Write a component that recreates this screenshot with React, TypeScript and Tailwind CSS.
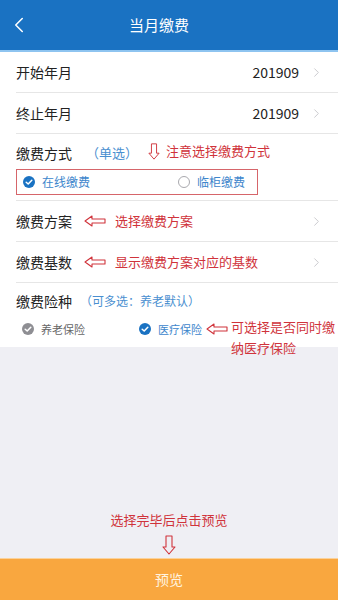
import { ChevronLeft, ChevronRight } from 'lucide-react';

const RED = '#d0333b';

function LeftArrow() {
  return (
    <svg width="22" height="12" viewBox="0 0 22 12" className="shrink-0">
      <path d="M1 6 L8 1 V4 H21 V8 H8 V11 Z" fill="none" stroke={RED} strokeWidth="1.1" strokeLinejoin="round" />
    </svg>
  );
}

function DownArrow({ w = 14, h = 20 }: { w?: number; h?: number }) {
  return (
    <svg width={w} height={h} viewBox="0 0 14 20" className="shrink-0">
      <path d="M4 1 H10 V12 H13 L7 19 L1 12 H4 Z" fill="none" stroke={RED} strokeWidth="1.1" strokeLinejoin="round" />
    </svg>
  );
}

function Check({ color }: { color: string }) {
  return (
    <svg width="12" height="12" viewBox="0 0 12 12" className="shrink-0">
      <circle cx="6" cy="6" r="6" fill={color} />
      <path d="M3.2 6.2 L5.2 8 L8.8 4.2" fill="none" stroke="#fff" strokeWidth="1.5" strokeLinecap="round" strokeLinejoin="round" />
    </svg>
  );
}

function Row({ label, value, note }: { label: string; value?: string; note?: string }) {
  return (
    <div className="flex items-center h-[41px] border-b border-[#e6e6e6] pr-[14px]">
      <span className="text-[14px] text-[#222]">{label}</span>
      {note && (
        <div className="flex items-center ml-[12px] gap-[9px]">
          <LeftArrow />
          <span className="text-[13px]" style={{ color: RED }}>{note}</span>
        </div>
      )}
      <span className="ml-auto text-[14px] text-[#222] mr-[10px]">{value}</span>
      <ChevronRight size={15} strokeWidth={1.5} className="text-[#c7c7cc]" />
    </div>
  );
}

export default function App() {
  return (
    <div
      className="flex flex-col h-[600px] w-[338px] bg-[#efeff4] overflow-hidden"
      style={{ fontFamily: '"Noto Sans CJK SC", "Liberation Sans", sans-serif' }}
    >
      {/* Header */}
      <div className="relative flex items-center justify-center h-[52px] bg-[#1a72c2] border-b-2 border-[#8ec4f0] shrink-0">
        <ChevronLeft size={26} strokeWidth={1.4} className="absolute left-[6px] top-[12px] text-white" />
        <span className="text-[15px] text-white -ml-[20px]">当月缴费</span>
      </div>

      <div className="bg-white pl-[16px] relative">
        <Row label="开始年月" value="201909" />
        <Row label="终止年月" value="201909" />

        {/* 缴费方式 */}
        <div className="border-b border-[#e6e6e6] pb-[5px]">
          <div className="flex items-center h-[35px] pt-[3px]">
            <span className="text-[14px] text-[#222]">缴费方式</span>
            <span className="text-[13px] text-[#4a8fd0] ml-[14px]">（单选）</span>
            <div className="flex items-center ml-[10px] gap-[6px] -mt-[4px]">
              <DownArrow w={12} h={17} />
              <span className="text-[13px]" style={{ color: RED }}>注意选择缴费方式</span>
            </div>
          </div>
          <div className="flex items-center w-[242px] h-[26px] border border-[#d6656a] pl-[6px]">
            <Check color="#1a72c2" />
            <span className="text-[12px] text-[#3d86cc] ml-[7px]">在线缴费</span>
            <span className="ml-[88px] w-[12px] h-[12px] rounded-full border border-[#a9a9ae]" />
            <span className="text-[12px] text-[#3d86cc] ml-[7px]">临柜缴费</span>
          </div>
        </div>

        <Row label="缴费方案" note="选择缴费方案" />
        <Row label="缴费基数" note="显示缴费方案对应的基数" />

        {/* 缴费险种 */}
        <div className="h-[64px] pt-[6px]">
          <div className="flex items-center h-[24px]">
            <span className="text-[14px] text-[#222]">缴费险种</span>
            <span className="text-[12px] text-[#4a8fd0] ml-[8px]">（可多选：养老默认）</span>
          </div>
          <div className="flex items-center h-[24px] mt-[4px] pl-[6px]">
            <Check color="#8e8e93" />
            <span className="text-[11px] text-[#666] ml-[7px]">养老保险</span>
            <span className="ml-[54px]">
              <Check color="#1a72c2" />
            </span>
            <span className="text-[11px] text-[#3d86cc] ml-[7px]">医疗保险</span>
            <span className="ml-[4px]">
              <LeftArrow />
            </span>
          </div>
        </div>
        <div className="absolute left-[231px] top-[264px] w-[107px] text-[13px] leading-[21px] z-10" style={{ color: RED }}>
          可选择是否同时缴纳医疗保险
        </div>
      </div>

      <div className="flex-1 flex flex-col items-center justify-end pb-[3px]">
        <span className="text-[13px] mb-[6px]" style={{ color: RED }}>选择完毕后点击预览</span>
        <DownArrow />
      </div>

      <button className="h-[42px] shrink-0 bg-[#f9a73f] border-t border-[#fbd29a] text-[14px] text-[#fff4e0]">
        预览
      </button>
    </div>
  );
}
